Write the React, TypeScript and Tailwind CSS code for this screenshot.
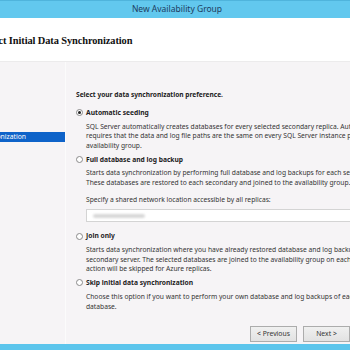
import React from "react";

const options = [
  {
    label: "Automatic seeding",
    checked: true,
    lines: [
      "SQL Server automatically creates databases for every selected secondary replica. Automatic seeding",
      "requires that the data and log file paths are the same on every SQL Server instance participating in the",
      "availability group.",
    ],
  },
  {
    label: "Full database and log backup",
    checked: false,
    lines: [
      "Starts data synchronization by performing full database and log backups for each selected database.",
      "These databases are restored to each secondary and joined to the availability group.",
    ],
    share: true,
  },
  {
    label: "Join only",
    checked: false,
    lines: [
      "Starts data synchronization where you have already restored database and log backups to each",
      "secondary server. The selected databases are joined to the availability group on each secondary. This",
      "action will be skipped for Azure replicas.",
    ],
  },
  {
    label: "Skip initial data synchronization",
    checked: false,
    lines: [
      "Choose this option if you want to perform your own database and log backups of each primary",
      "database.",
    ],
  },
];

function Radio({ checked }: { checked: boolean }) {
  return (
    <span className="w-[7px] h-[7px] rounded-full border border-[#8a8a8a] bg-white flex items-center justify-center shrink-0">
      {checked && <span className="w-[3px] h-[3px] rounded-full bg-[#222]" />}
    </span>
  );
}

export default function App() {
  return (
    <div className="w-[350px] h-[350px] overflow-hidden flex flex-col bg-[#f6f4f6] font-['Noto_Sans',sans-serif] text-[#222]">
      {/* window title */}
      <div className="h-[18px] shrink-0 bg-[#62c8ee] border-t border-[#4fb4dc] flex items-center justify-center">
        <span className="text-[8.5px] text-[#1d3c5e] pl-[4px]">New Availability Group</span>
      </div>

      {/* page header */}
      <div className="h-[44px] shrink-0 bg-white border-b border-[#ecebec] flex items-center">
        <span className="ml-[-19px] text-[10.4px] font-bold text-[#111] font-['Liberation_Serif',serif] tracking-[-0.1px] mt-[2px] whitespace-nowrap">
          Select Initial Data Synchronization
        </span>
      </div>

      {/* body */}
      <div className="flex-1 flex min-h-0">
        <div className="w-[66px] shrink-0 border-r border-[#fbfbfb] pt-[70px]">
          <div className="h-[10px] bg-[#0e63c9] text-white text-[6.8px] leading-[10px] overflow-hidden whitespace-nowrap flex justify-end pr-[39px]">
            Synchronization
          </div>
        </div>

        <div className="flex-1 pl-[10px] pt-[28px] whitespace-nowrap overflow-hidden text-[6.7px] leading-[9.6px]">
          <div className="font-bold text-[6.6px]">Select your data synchronization preference.</div>

          <div className="mt-[6px] flex flex-col gap-[2px]">
            {options.map((o) => (
              <div key={o.label}>
                <div className="flex items-center gap-[3px] h-[14px]">
                  <Radio checked={o.checked} />
                  <span className="font-bold">{o.label}</span>
                </div>
                <div className="pl-[10px] mt-[2px] text-[#333]">
                  {o.lines.map((l) => (
                    <div key={l}>{l}</div>
                  ))}
                  {o.share && (
                    <>
                      <div className="mt-[7px]">Specify a shared network location accessible by all replicas:</div>
                      <div className="mt-[5px] mb-[5px] h-[13px] w-[300px] bg-white border border-[#d4d4d4] flex items-center pl-[6px]">
                        <span className="w-[52px] h-[4px] rounded-full bg-[#d8d8d8] blur-[1px]" />
                      </div>
                    </>
                  )}
                </div>
              </div>
            ))}
          </div>

          <div className="mt-[15px] flex gap-[6px] pl-[174px]">
            <button className="w-[49px] h-[16px] border border-[#acacac] bg-gradient-to-b from-[#f0f0f0] to-[#e2e2e2] text-[6.8px] text-[#333]">
              &lt; Previous
            </button>
            <button className="w-[49px] h-[16px] border border-[#acacac] bg-gradient-to-b from-[#f0f0f0] to-[#e2e2e2] text-[6.8px] text-[#333]">
              Next &gt;
            </button>
          </div>
        </div>
      </div>

      <div className="h-[6px] shrink-0 bg-[#5cc5ec]" />
    </div>
  );
}
